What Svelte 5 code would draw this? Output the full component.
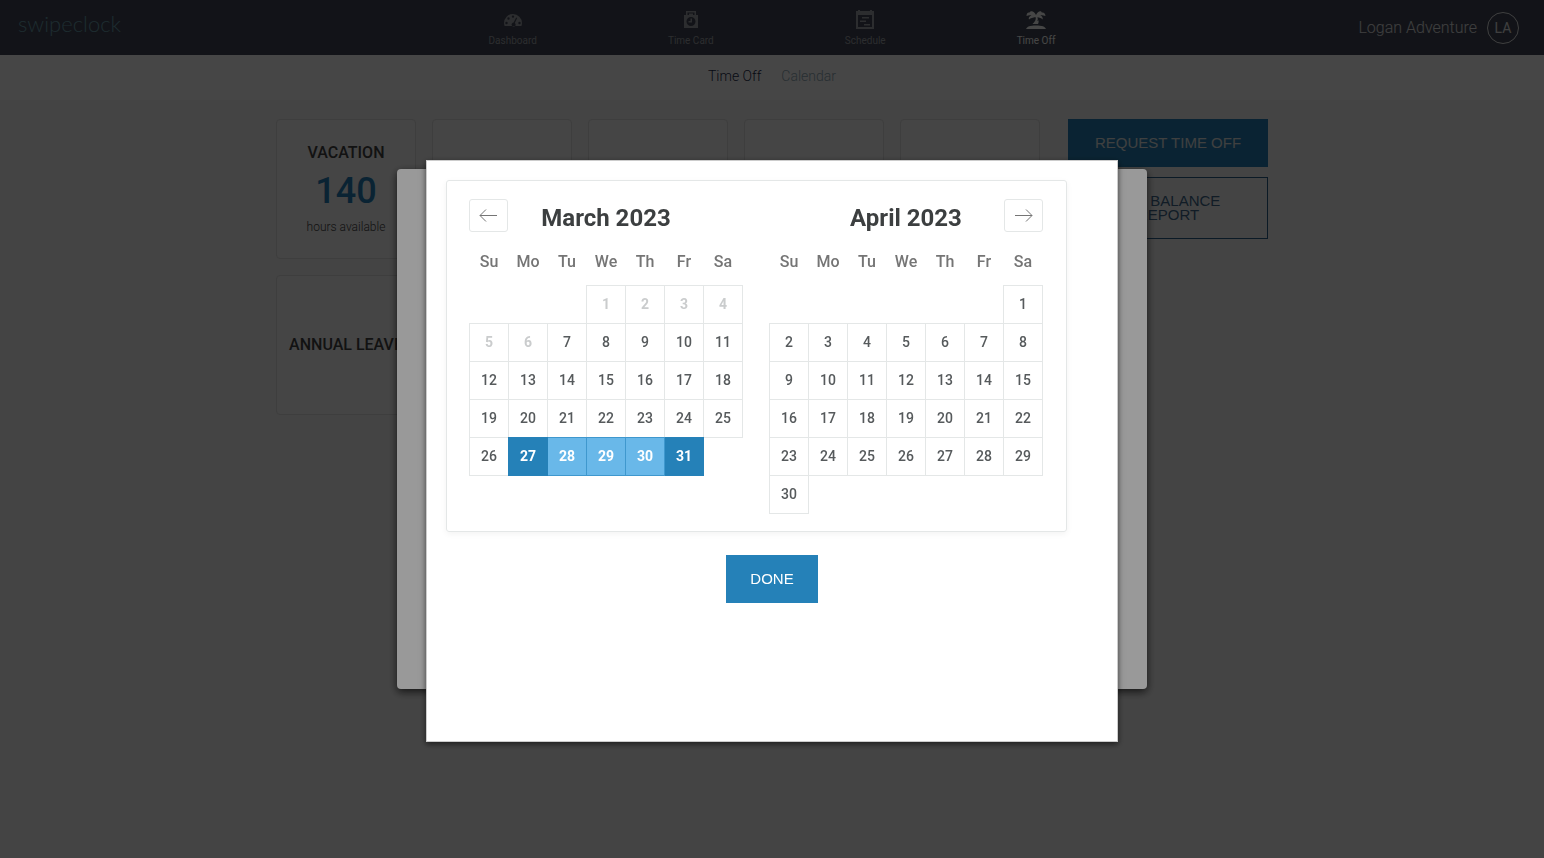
<script>
  const navItems = [
    { label: 'Dashboard', icon: 'gauge' },
    { label: 'Time Card', icon: 'card' },
    { label: 'Schedule', icon: 'schedule' },
    { label: 'Time Off', icon: 'palm' }
  ];
  const weekdays = ['Su', 'Mo', 'Tu', 'We', 'Th', 'Fr', 'Sa'];
  const months = [
    { title: 'March 2023', offset: 3, length: 31, firstOpen: 7 },
    { title: 'April 2023', offset: 6, length: 30, firstOpen: 1 }
  ];

  let activeNav = 'Time Off';
  let start = { month: 0, day: 27 };
  let end = { month: 0, day: 31 };
  let picking = false;

  const weeksOf = ({ offset, length }) => {
    const weeks = [];
    for (let first = 1 - offset; first <= length; first += 7) {
      weeks.push(weekdays.map((_, i) => {
        const day = first + i;
        return day > 0 && day <= length ? day : null;
      }));
    }
    return weeks;
  };

  const rank = (month, day) => month * 100 + day;

  const stateOf = (month, day, from, to) => {
    const value = rank(month, day);
    const a = rank(from.month, from.day);
    const b = rank(to.month, to.day);
    if (value === a || value === b) return 'selected';
    return value > a && value < b ? 'span' : '';
  };

  const pick = (month, day) => {
    if (picking && rank(month, day) >= rank(start.month, start.day)) {
      end = { month, day };
      picking = false;
    } else {
      start = { month, day };
      end = { month, day };
      picking = true;
    }
  };
</script>

<div class="page">
  <header>
    <a class="logo" href="#home">swipeclock</a>
    <nav class="main-nav">
      {#each navItems as item}
        <a href="#{item.icon}" class:active={item.label === activeNav}>
          <svg viewBox="0 0 20 20" width="20" height="20" fill="currentColor" aria-hidden="true">
            {#if item.icon === 'gauge'}
              <path fill-rule="evenodd" d="M10 4a9 9 0 0 0-9 9c0 1 .2 2 .6 3h16.800c.4-1 .6-2 .6-3a9 9 0 0 0-9-9zM10 5.400a1.200 1.200 0 1 1 0 2.400 1.200 1.200 0 0 1 0-2.400zM5.500 7.300a1.200 1.200 0 1 1 0 2.400 1.200 1.200 0 0 1 0-2.400zM3.500 11.800a1.200 1.200 0 1 1 0 2.400 1.200 1.200 0 0 1 0-2.400zM16.500 11.800a1.200 1.200 0 1 1 0 2.400 1.200 1.200 0 0 1 0-2.400zM13.200 7.500l1 .4-2.400 5.100a2 2 0 1 1-1.200-.4z" />
            {:else if item.icon === 'card'}
              <path fill-rule="evenodd" d="M5 1h10v4h2v13H3V5h2zM6.500 2.500V5H8V3.500h4V5h1.500V2.500zM10 7a4.500 4.500 0 1 0 0 9 4.500 4.500 0 0 0 0-9z" />
              <path d="M9.500 8.500H11v4H7.500V11h2z" />
            {:else if item.icon === 'schedule'}
              <path fill-rule="evenodd" d="M3 0h2v1h10V0h2v1h2v18H1V1h2zM3 5v12h14V5z" />
              <path d="M7 7h7v1.500H7zM5 10.500h6V12H5zM9 14h6v1.500H9z" />
            {:else}
              <path d="M10 5C8.500 1.500 5 0 3.500 2.500 1.500 2 .5 4 .5 6c2-1 3.500-1 5-.5C3 6 2.300 8 3 9.500 4.500 8 7 7.500 9.500 7c1 2.500-.5 4.500-3 7h5.500c.8-1.500.8-2.800.3-3.800L11 11l.8-1.500c0-1-.2-1.800-.4-2.300 2 .2 4 .8 5.200 2.300.5-2-.5-3.400-2.400-4 1.500-.5 3-.4 5.300.5 0-2.400-1.700-4-3.700-3.500C15 0 11.500 1.500 10 5z" />
              <path d="M0 19c1-2.500 4-3.500 10-3.500S19 16.500 20 19z" />
            {/if}
          </svg>
          {item.label}
        </a>
      {/each}
    </nav>
    <button class="account">
      Logan Adventure
      <span class="avatar">LA</span>
    </button>
  </header>

  <nav class="sub-nav">
    <a class="current" href="#time-off">Time Off</a>
    <a href="#calendar">Calendar</a>
  </nav>

  <main>
    <section class="balances">
      <article class="balance">
        <h2>VACATION</h2>
        <strong>140</strong>
        <p>hours available</p>
      </article>
      <article class="balance"></article>
      <article class="balance"></article>
      <article class="balance"></article>
      <article class="balance"></article>
      <article class="balance">
        <h2>ANNUAL LEAVE</h2>
      </article>
    </section>
    <aside>
      <button class="btn request-btn">REQUEST TIME OFF</button>
      <button class="btn outline">PTO BALANCE REPORT</button>
    </aside>
  </main>
</div>

<div class="overlay request">
  <div class="request-panel"></div>
</div>

<div class="overlay picker">
  <div class="picker-panel" role="dialog" aria-label="Select dates">
    <div class="calendar">
      {#each months as month, m}
        <div class="month">
          <div class="caption">
            {#if m === 0}
              <button class="arrow" aria-label="Previous month">
                <svg viewBox="0 0 19 19" width="19" height="19" aria-hidden="true">
                  <path d="M18 9.500H1M7 3.500l-6 6 6 6" />
                </svg>
              </button>
            {/if}
            <h3>{month.title}</h3>
            {#if m === 1}
              <button class="arrow" aria-label="Next month">
                <svg viewBox="0 0 19 19" width="19" height="19" aria-hidden="true">
                  <path d="M1 9.500h17M12 3.500l6 6-6 6" />
                </svg>
              </button>
            {/if}
          </div>
          <table>
            <thead>
              <tr>
                {#each weekdays as weekday}
                  <th scope="col">{weekday}</th>
                {/each}
              </tr>
            </thead>
            <tbody>
              {#each weeksOf(month) as week}
                <tr>
                  {#each week as day}
                    {#if day}
                      <td class="day {stateOf(m, day, start, end)}">
                        <button disabled={day < month.firstOpen} on:click={() => pick(m, day)}>{day}</button>
                      </td>
                    {:else}
                      <td></td>
                    {/if}
                  {/each}
                </tr>
              {/each}
            </tbody>
          </table>
        </div>
      {/each}
    </div>
    <button class="btn">DONE</button>
  </div>
</div>

<style>
  :global(body) {
    margin: 0;
    background: #f7f7f7;
    font-family: Roboto, sans-serif;
  }
  * {
    box-sizing: border-box;
  }
  a {
    color: inherit;
    text-decoration: none;
  }
  button {
    font: inherit;
    color: inherit;
    background: none;
    border: 0;
    padding: 0;
    cursor: pointer;
  }
  h2, h3, p {
    margin: 0;
  }
  .page {
    min-height: 100vh;
  }

  header {
    height: 55px;
    padding: 0 18px;
    display: grid;
    grid-template-columns: 1fr auto 1fr;
    align-items: center;
    background: #424857;
    color: #fff;
  }
  .logo {
    padding-bottom: 8px;
    font: 300 22px/28px Lato, sans-serif;
    color: #6a9fae;
  }
  .main-nav {
    padding-top: 2px;
    display: flex;
    gap: 131px;
    font-size: 10px;
    line-height: 12px;
  }
  .main-nav a {
    display: flex;
    flex-direction: column;
    align-items: center;
    gap: 5px;
    color: #a0a3aa;
  }
  .main-nav a.active {
    color: #fff;
  }
  .account {
    justify-self: end;
    margin-right: 7px;
    display: flex;
    align-items: center;
    gap: 10px;
    font-size: 16px;
    font-weight: 300;
    color: #e4e4e6;
  }
  .avatar {
    width: 32px;
    height: 32px;
    border: 1px solid #e4e4e6;
    border-radius: 50%;
    font-size: 14px;
    font-weight: 400;
    line-height: 31px;
    text-align: center;
  }

  .sub-nav {
    height: 45px;
    padding-top: 12px;
    display: flex;
    justify-content: center;
    gap: 20px;
    background: #fff;
    font-size: 14px;
    font-weight: 300;
    line-height: 18px;
    color: #8fa9b5;
  }
  .sub-nav .current {
    color: #1d2c4c;
  }

  main {
    max-width: 992px;
    margin: 0 auto;
    padding-top: 19px;
    display: flex;
    justify-content: space-between;
    align-items: flex-start;
    gap: 28px;
  }
  .balances {
    display: grid;
    grid-template-columns: repeat(5, 140px);
    gap: 16px;
  }
  .balance {
    height: 140px;
    display: flex;
    flex-direction: column;
    align-items: center;
    justify-content: center;
    background: #f9f9f9;
    border: 1px solid #e0e0e0;
    border-radius: 4px;
    text-align: center;
    color: #444;
  }
  .balance h2 {
    font-size: 16px;
    line-height: 20px;
    font-weight: 500;
    white-space: nowrap;
  }
  .balance strong {
    font-size: 36px;
    line-height: 56px;
    font-weight: 500;
    color: #2581b8;
  }
  .balance p {
    font-size: 12px;
    line-height: 16px;
    font-weight: 300;
  }
  aside {
    width: 200px;
    display: flex;
    flex-direction: column;
    gap: 10px;
  }
  .btn {
    min-height: 48px;
    padding: 0 24px;
    background: #2581b8;
    color: #fff;
    font: 15px/14px "Liberation Sans", Arial, sans-serif;
  }
  .request-btn {
    color: #e4e8ea;
  }
  .btn.outline {
    min-height: 62px;
    background: none;
    border: 1px solid #2b5f8c;
    color: #3f678c;
  }

  .overlay {
    position: fixed;
    inset: 0;
    display: flex;
    justify-content: center;
  }
  .request {
    align-items: center;
    background: rgba(0, 0, 0, .54);
  }
  .request-panel {
    width: 750px;
    height: 520px;
    background: #fff;
    border-radius: 4px;
    box-shadow: 0 3px 9px rgba(0, 0, 0, .7);
  }
  .picker {
    align-items: flex-start;
    padding-top: 160px;
    background: rgba(0, 0, 0, .4);
  }
  .picker-panel {
    width: 692px;
    min-height: 582px;
    padding: 19px;
    display: flex;
    flex-direction: column;
    align-items: center;
    gap: 23px;
    background: #fff;
    border: 1px solid #ccc;
    box-shadow: 0 2px 6px rgba(0, 0, 0, .6);
  }

  .calendar {
    align-self: flex-start;
    padding: 18px 23px 17px 22px;
    display: flex;
    gap: 26px;
    border: 1px solid #e4e7e7;
    border-radius: 3px;
    box-shadow: 0 2px 6px rgba(0, 0, 0, .05);
  }
  .caption {
    height: 39px;
    display: grid;
    grid-template-columns: 39px 1fr 39px;
    align-items: start;
  }
  .caption h3 {
    grid-column: 2;
    font-size: 24px;
    line-height: 39px;
    font-weight: 700;
    text-align: center;
    color: #3c3f40;
  }
  .arrow {
    height: 33px;
    display: grid;
    place-items: center;
    border: 1px solid #e4e7e7;
    border-radius: 3px;
  }
  .arrow svg {
    fill: none;
    stroke: #757575;
  }
  table {
    width: 274px;
    table-layout: fixed;
    border-collapse: collapse;
  }
  th {
    height: 47px;
    padding: 0;
    font-size: 16px;
    font-weight: 500;
    color: #757575;
  }
  td {
    height: 38px;
    padding: 0;
  }
  td button {
    display: block;
    width: 100%;
    height: 37px;
  }
  .day {
    border: 1px solid #e4e7e7;
    font-size: 14px;
    font-weight: 500;
    color: #565a5c;
  }
  .day button:disabled {
    color: #cacccd;
    font-weight: 700;
    cursor: default;
  }
  /* a double border wins over the solid one of the neighbouring cells */
  .day.selected,
  .day.span {
    border: 1px double #2581b8;
    color: #fff;
    font-weight: 700;
  }
  .day.selected {
    background: #2581b8;
  }
  .day.span {
    background: #69b8e9;
    border-color: #3f98ce;
  }
</style>
